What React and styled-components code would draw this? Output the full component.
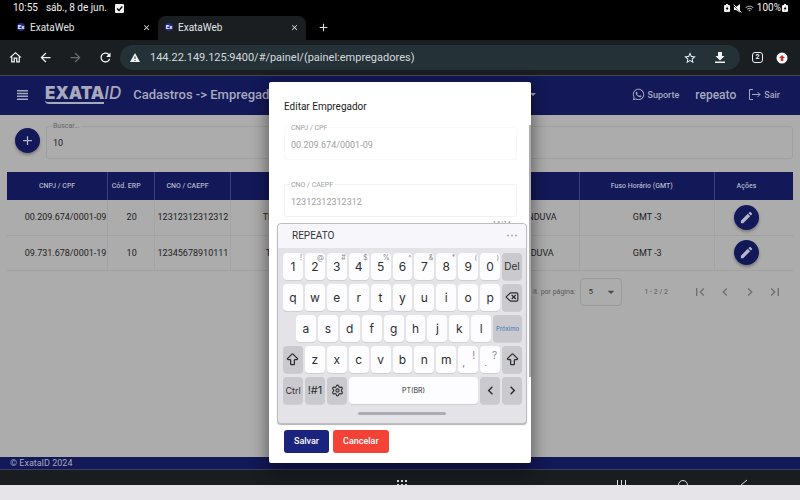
import React from "react";
import styled, { createGlobalStyle } from "styled-components";
import {
  MdOutlineHome, MdArrowBack, MdArrowForward, MdRefresh, MdStarBorder,
  MdClose, MdAdd, MdEdit, MdFirstPage, MdLastPage, MdChevronLeft,
  MdChevronRight, MdArrowDropDown, MdWifi,
} from "react-icons/md";
import { FaWhatsapp } from "react-icons/fa";
import { Settings, Delete, ArrowBigUp } from "lucide-react";

const navy = "#121858";
const gray = "#acacac";

const Global = createGlobalStyle`
  * { box-sizing: border-box; }
  body { margin: 0; font-family: Roboto, sans-serif; overflow: hidden; }
  button, input, select { font-family: inherit; margin: 0; }
  button { border: 0; padding: 0; background: none; color: inherit; display: inline-flex; align-items: center; justify-content: center; }
  a { color: inherit; text-decoration: none; }
  svg { display: block; flex: none; }
`;

const Screen = styled.div`
  display: flex;
  flex-direction: column;
  min-height: 100vh;
  background: #000;
`;

const StatusBar = styled.div`
  display: flex;
  align-items: center;
  gap: 8px;
  height: 16px;
  padding: 0 12px 0 13px;
  color: #f2f2f2;
  font-size: 10px;
  line-height: 16px;
`;
const StatusIcons = styled.div`
  display: flex;
  align-items: center;
  gap: 3px;
  margin-left: auto;
`;
const Charge = styled.span`
  display: flex;
  align-items: center;
  gap: 1px;
`;

const TabStrip = styled.div`
  display: flex;
  height: 24px;
  padding-left: 10px;
`;
const Tab = styled.div`
  display: flex;
  align-items: center;
  gap: 5px;
  width: 148px;
  padding: 0 7px 2px;
  border-radius: 8px 8px 0 0;
  color: #e3e6e8;
  font-size: 10px;
  background: ${(p) => (p.$active ? "#1a1e21" : "transparent")};
`;
const Favicon = styled.span`
  width: 8px;
  height: 8px;
  border-radius: 4px;
  background: #23298a;
  color: #fff;
  font-size: 6px;
  font-weight: 700;
  line-height: 8px;
  text-align: center;
`;
const TabClose = styled.button`
  margin-left: auto;
`;
const NewTab = styled.button`
  && {
    width: 34px;
    height: 22px;
    color: #e3e6e8;
  }
`;

const BrowserBar = styled.div`
  display: flex;
  align-items: center;
  height: 36px;
  padding-right: 11px;
  background: #1a1e21;
  border-bottom: 1px solid #45484b;
  color: #f1f3f4;
`;
const BarButton = styled.button`
  width: ${(p) => p.$w || 30}px;
  height: 24px;
  && { color: ${(p) => (p.$dim ? "#676b6e" : "#f1f3f4")}; }
`;
const Address = styled.div`
  display: flex;
  align-items: center;
  flex: 1;
  height: 25px;
  padding: 0 5px 0 10px;
  border-radius: 13px;
  background: #243238;
`;
const UrlInput = styled.input`
  flex: 1;
  min-width: 0;
  padding: 0 0 0 10px;
  border: 0;
  background: none;
  color: #d5dadd;
  font-size: 11px;
  outline: 0;
`;
const TabCount = styled.span`
  width: 11px;
  height: 11px;
  border: 1px solid #f1f3f4;
  border-radius: 3px;
  font-size: 7px;
  font-weight: 700;
  line-height: 9px;
  text-align: center;
`;

const Site = styled.div`
  position: relative;
  display: flex;
  flex-direction: column;
  flex: 1;
  background: ${gray};
`;
const Header = styled.header`
  display: flex;
  align-items: center;
  height: 39px;
  padding: 0 20px 2px 16px;
  background: ${navy};
  color: #a7a9bd;
`;
const Logo = styled.div`
  display: flex;
  margin: 0 12px 0 16px;
  font-family: Inter, sans-serif;
  font-size: 17px;
  line-height: 17px;
`;
const LogoBold = styled.span`
  font-weight: 900;
  border-bottom: 2px solid #a7a9bd;
  border-radius: 0 0 0 4px;
`;
const LogoThin = styled.span`
  font-weight: 500;
  font-style: italic;
`;
const Crumb = styled.h1`
  width: 153px;
  margin: 0;
  font-size: 13px;
  font-weight: 500;
  white-space: nowrap;
`;
const CompanyMenu = styled.button`
  width: 250px;
  && { justify-content: flex-end; }
`;
const HeaderLinks = styled.nav`
  display: flex;
  align-items: center;
  gap: 12px;
  margin-left: auto;
  font-size: 9px;
  font-weight: 500;
`;
const HeaderLink = styled.a`
  display: flex;
  align-items: center;
  gap: 3px;
`;
const User = styled.span`
  margin-left: 4px;
  font-size: 12px;
`;

const Main = styled.main`
  flex: 1;
  padding: 7px 7px 0;
  color: #222;
`;
const SearchRow = styled.div`
  display: flex;
  align-items: center;
  gap: 6px;
  padding-left: 8px;
`;
const Fab = styled.button`
  && {
    width: 25px;
    height: 25px;
    border-radius: 13px;
    background: ${navy};
    color: #b5b7ca;
    box-shadow: 0 2px 3px rgba(0, 0, 0, 0.3);
  }
`;
const Outlined = styled.fieldset`
  flex: 1 1 auto;
  min-width: 0;
  height: ${(p) => p.$h}px;
  margin: 0;
  padding: 0 5px;
  border: 1px solid ${(p) => p.$line};
  border-radius: 3px;
`;
const FloatLabel = styled.legend`
  padding: 0 1px;
  height: 8px;
  color: ${(p) => p.$color};
  font-size: 7px;
  line-height: 8px;
`;
const FieldInput = styled.input`
  display: block;
  width: 100%;
  height: 26px;
  padding: 0 1px;
  border: 0;
  outline: 0;
  background: none;
  color: ${(p) => p.$color};
  font-size: 9px;
`;

const Table = styled.table`
  width: 100%;
  margin-top: 13px;
  border-collapse: collapse;
  table-layout: fixed;
  font-size: 9px;
  text-align: center;
`;
const Col = styled.col`
  width: ${(p) => p.$w};
`;
const Th = styled.th`
  height: 28px;
  padding: 0 10px 0 0;
  background: ${navy};
  border-right: 1px solid #3b4078;
  color: #b3b5c8;
  font-size: 7px;
  font-weight: 500;
  white-space: nowrap;
  &:first-child { padding-right: 0; }
  &:last-child { border-right: 0; padding-right: 15px; }
`;
const Td = styled.td`
  height: 35px;
  padding: 0 0 0 1px;
  border-right: 1px solid #a4a4a4;
  border-bottom: 1px solid #a0a0a0;
  white-space: nowrap;
  &:first-child { padding-left: 17px; }
  &:last-child { border-right: 0; padding-right: 15px; }
`;

const Pager = styled.div`
  display: flex;
  align-items: center;
  justify-content: flex-end;
  height: 45px;
  padding: 0 10px 3px 0;
  color: #5a5a5a;
  font-size: 7px;
`;
const SelectBox = styled.div`
  position: relative;
  margin: 0 22px 0 5px;
  color: #4a4a4a;
  > svg { position: absolute; right: 3px; top: 6px; pointer-events: none; }
`;
const PageSize = styled.select`
  display: block;
  width: 42px;
  height: 28px;
  padding: 0 7px;
  appearance: none;
  border: 1px solid #999;
  border-radius: 4px;
  background: none;
  color: #333;
  font-size: 8px;
`;
const PageButtons = styled.div`
  display: flex;
  gap: 9px;
  margin-left: 24px;
  color: #707070;
`;

const Footer = styled.footer`
  height: 13px;
  padding-left: 10px;
  background: ${navy};
  border-bottom: 1px solid #3c4060;
  color: #a7a9bd;
  font-size: 9px;
  line-height: 12px;
`;

const Overlay = styled.div`
  position: absolute;
  inset: 0;
  display: flex;
  align-items: center;
  justify-content: center;
  padding-bottom: 2px;
`;
const Dialog = styled.form`
  position: relative;
  width: 262px;
  padding: 18px 14px 10px 15px;
  border-radius: 2px;
  background: #fff;
  box-shadow: 0 6px 16px 2px rgba(0, 0, 0, 0.45);
`;
const DialogTitle = styled.h2`
  margin: 0 0 10px;
  color: #222;
  font-size: 10px;
  font-weight: 400;
  line-height: 14px;
`;
const DialogFields = styled.div`
  display: flex;
  flex-direction: column;
  gap: 21px;
  height: 294px;
`;
const DialogField = styled.div`
  display: flex;
  flex-direction: column;
`;
const Counter = styled.span`
  align-self: flex-end;
  margin: 3px 6px 0 0;
  color: #888;
  font-size: 7px;
  line-height: 8px;
`;
const Actions = styled.div`
  display: flex;
  gap: 4px;
  margin-top: 12px;
`;
const Action = styled.button`
  && {
    height: 23px;
    padding: 0 10px;
    border-radius: 3px;
    background: ${(p) => p.$bg};
    color: #fff;
    font-size: 9px;
    font-weight: 500;
  }
`;
const ScrollThumb = styled.div`
  position: absolute;
  top: 43px;
  right: 0;
  width: 2px;
  height: 252px;
  background: #adadad;
`;

const Keyboard = styled.div`
  position: absolute;
  left: 8px;
  top: 141px;
  width: 250px;
  border: 1px solid #bdbdc1;
  border-radius: 4px;
  background: #e3e3e8;
  box-shadow: 0 1px 1px rgba(0, 0, 0, 0.3);
`;
const Suggest = styled.div`
  display: flex;
  align-items: center;
  justify-content: space-between;
  height: 24px;
  padding: 0 9px 0 14px;
  border-radius: 4px 4px 0 0;
  background: #f7f7fb;
  color: #333;
  font-size: 10px;
`;
const Keys = styled.div`
  display: flex;
  flex-direction: column;
  gap: 4px;
  padding: 5px 4px 0 5px;
  font-family: Inter, sans-serif;
`;
const KeyRow = styled.div`
  display: flex;
  gap: 2px;
  padding-left: ${(p) => (p.$inset ? 13 : 0)}px;
`;
const Key = styled.button`
  && {
    position: relative;
    flex: ${(p) => p.$grow || 1} 1 0;
    min-width: 0;
    height: 27px;
    border-radius: 4px;
    background: ${(p) => (p.$dark ? "#c9c9ce" : "#fdfdff")};
    box-shadow: 0 1px 0 #cfcfd4;
    color: ${(p) => (p.$blue ? "#3a78bd" : "#2d2d30")};
    font-size: ${(p) => p.$size || 12}px;
  }
`;
const Hint = styled.span`
  position: absolute;
  top: 1px;
  right: 1px;
  color: #8a8a90;
  font-size: 7px;
  line-height: 8px;
`;
const PunctHint = styled(Hint)`
  top: 4px;
  right: 3px;
  font-size: 10px;
  line-height: 10px;
`;
const PunctMark = styled.span`
  flex: 1;
  padding: 6px 0 0 4px;
  color: #77777c;
  font-size: 10px;
  line-height: 12px;
  text-align: left;
`;
const HomePill = styled.div`
  width: 88px;
  height: 3px;
  margin: 8px auto;
  border-radius: 2px;
  background: #adadb1;
`;

const SystemBar = styled.div`
  display: flex;
  align-items: flex-end;
  height: 15px;
  padding: 0 52px 0 397px;
  background: #1a1d20;
  color: #ddd;
`;
const SystemKeys = styled.div`
  display: flex;
  gap: 51px;
  margin-left: auto;
`;
const Strip = styled.div`
  height: 15px;
  background: #e6e4e9;
`;

const digits = [["1", "!"], ["2", "@"], ["3", "#"], ["4", "$"], ["5", "%"], ["6", "^"], ["7", "&"], ["8", "*"], ["9", "("], ["0", ")"]];
const columns = ["12.8%", "6%", "9.6%", "22.2%", "22.2%", "17.2%", "10%"];
const rows = [
  { cnpj: "00.209.674/0001-09", erp: "20", cno: "12312312312312", name: "TRANSPORTES CATANDUVA LTDA", city: "CATANDUVA" },
  { cnpj: "09.731.678/0001-19", erp: "10", cno: "12345678910111", name: "TRANSLOG CATANDUVA LTDA", city: "CATANDUVA" },
];

const NameTd = styled(Td)`
  padding-left: ${(p) => p.$pad}px;
  overflow: hidden;
  text-align: left;
`;
const CityTd = styled(Td)`
  padding-right: ${(p) => p.$pad}px;
  text-align: right;
`;

function Battery() {
  return (
    <svg width="6" height="9" viewBox="0 0 6 9">
      <path d="M2 0h2v1h1q1 0 1 1v5q0 1-1 1H1q-1 0-1-1V2q0-1 1-1h1z" fill="#f2f2f2" />
      <path d="M3.500 2.300L1.700 5h1v1.700L4.500 4h-1z" fill="#000" />
    </svg>
  );
}

function BrowserTab({ active }) {
  return (
    <Tab $active={active}>
      <Favicon>Ex</Favicon>
      <span>ExataWeb</span>
      <TabClose aria-label="Fechar aba"><MdClose size={9} /></TabClose>
    </Tab>
  );
}

function DialogInput({ id, label, value, line, counter }) {
  return (
    <DialogField>
      <Outlined $h={36} $line={line}>
        <FloatLabel $color="#a0a0a0"><label htmlFor={id}>{label}</label></FloatLabel>
        <FieldInput id={id} $color="#a0a0a0" defaultValue={value} disabled />
      </Outlined>
      {counter && <Counter>{counter}</Counter>}
    </DialogField>
  );
}

function VirtualKeyboard() {
  return (
    <Keyboard>
      <Suggest>
        <span>REPEATO</span>
        <svg width="11" height="3" fill="#aaaab0"><circle cx="2" cy="1.500" r="1" /><circle cx="6" cy="1.500" r="1" /><circle cx="10" cy="1.500" r="1" /></svg>
      </Suggest>
      <Keys>
        <KeyRow>
          {digits.map(([d, h]) => <Key type="button" key={d}>{d}<Hint>{h}</Hint></Key>)}
          <Key type="button" $dark $size={10}>Del</Key>
        </KeyRow>
        <KeyRow>
          {[..."qwertyuiop"].map((k) => <Key type="button" key={k}>{k}</Key>)}
          <Key type="button" $dark aria-label="Apagar"><Delete size={14} strokeWidth={2} /></Key>
        </KeyRow>
        <KeyRow $inset>
          {[..."asdfghjkl"].map((k) => <Key type="button" key={k}>{k}</Key>)}
          <Key type="button" $dark $blue $size={6} $grow={1.45}>Próximo</Key>
        </KeyRow>
        <KeyRow>
          <Key type="button" $dark aria-label="Shift"><ArrowBigUp size={15} strokeWidth={2} /></Key>
          {[..."zxcvbnm"].map((k) => <Key type="button" key={k}>{k}</Key>)}
          <Key type="button"><PunctMark>,</PunctMark><PunctHint>!</PunctHint></Key>
          <Key type="button"><PunctMark>.</PunctMark><PunctHint>?</PunctHint></Key>
          <Key type="button" $dark aria-label="Shift"><ArrowBigUp size={15} strokeWidth={2} /></Key>
        </KeyRow>
        <KeyRow>
          <Key type="button" $dark $size={9}>Ctrl</Key>
          <Key type="button" $dark $size={11}>!#1</Key>
          <Key type="button" $dark aria-label="Configurações"><Settings size={13} strokeWidth={2} /></Key>
          <Key type="button" $grow={6.45} $size={7}>PT(BR)</Key>
          <Key type="button" $dark aria-label="Esquerda"><MdChevronLeft size={17} /></Key>
          <Key type="button" $dark aria-label="Direita"><MdChevronRight size={17} /></Key>
        </KeyRow>
      </Keys>
      <HomePill />
    </Keyboard>
  );
}

export default function App() {
  return (
    <Screen>
      <Global />
      <StatusBar>
        <span>10:55</span>
        <span>sáb., 8 de jun.</span>
        <svg width="9" height="9" viewBox="0 0 9 9">
          <rect width="9" height="9" rx="1" fill="#f2f2f2" />
          <path d="M2 4.500l2 2L7.300 2.500" fill="none" stroke="#000" strokeWidth="1.300" />
        </svg>
        <StatusIcons>
          <Battery />
          <svg width="9" height="9" viewBox="0 0 9 9" fill="#f2f2f2">
            <path d="M1 3h2L7 0v8.500L3 6H1z" />
            <path d="M.5 1.500l8 7" stroke="#000" /><path d="M.7.700l7.800 7.800" stroke="#f2f2f2" />
          </svg>
          <MdWifi size={9} color="#aaa" />
          <Charge><span>100%</span><Battery /></Charge>
        </StatusIcons>
      </StatusBar>
      <TabStrip>
        <BrowserTab />
        <BrowserTab active />
        <NewTab aria-label="Nova aba"><MdAdd size={13} /></NewTab>
      </TabStrip>
      <BrowserBar>
        <BarButton aria-label="Início"><MdOutlineHome size={15} /></BarButton>
        <BarButton aria-label="Voltar"><MdArrowBack size={15} /></BarButton>
        <BarButton $dim aria-label="Avançar"><MdArrowForward size={15} /></BarButton>
        <BarButton aria-label="Atualizar"><MdRefresh size={15} /></BarButton>
        <Address>
          <svg width="10" height="9" fill="#f1f3f4"><path d="M5 0l5 9H0z" /><path d="M4.500 3.500h1v2.500h-1zM4.500 7h1v1h-1z" fill="#243238" /></svg>
          <UrlInput aria-label="Endereço" defaultValue="144.22.149.125:9400/#/painel/(painel:empregadores)" />
          <BarButton aria-label="Favoritar"><MdStarBorder size={14} /></BarButton>
          <BarButton aria-label="Baixar">
            <svg width="10" height="11" fill="currentColor"><path d="M3 0h4v4h2.500L5 8.500.500 4H3zM0 9.500h10V11H0z" /></svg>
          </BarButton>
        </Address>
        <BarButton $w={35} aria-label="Abas"><TabCount>2</TabCount></BarButton>
        <BarButton $w={14} aria-label="Menu">
          <svg width="12" height="12"><circle cx="6" cy="6" r="5.500" fill="#fff" /><path d="M6 3l3 3H7.300v3H4.700V6H3z" fill="#d93025" /></svg>
        </BarButton>
      </BrowserBar>

      <Site>
        <Header>
          <BarButton $w={13} aria-label="Menu">
            <svg width="11" height="10" fill="#a7a9bd"><path d="M0 0h11v1.500H0zM0 2.800h11v1.500H0zM0 5.600h11v1.500H0zM0 8.400h11v1.500H0z" /></svg>
          </BarButton>
          <Logo><LogoBold>EXATA</LogoBold><LogoThin>ID</LogoThin></Logo>
          <Crumb>Cadastros -&gt; Empregadores</Crumb>
          <CompanyMenu aria-label="Empresa"><svg width="6" height="3" fill="currentColor"><path d="M0 0h6L3 3z" /></svg></CompanyMenu>
          <HeaderLinks>
            <HeaderLink href="#suporte"><FaWhatsapp size={13} />Suporte</HeaderLink>
            <User>repeato</User>
            <HeaderLink href="#sair">
              <svg width="13" height="13" viewBox="0 0 13 13" fill="none" stroke="currentColor"><path d="M5 1.500H1.500v10H5M4 6.500h8M9.500 4l2.500 2.500L9.500 9" /></svg>
              Sair
            </HeaderLink>
          </HeaderLinks>
        </Header>
        <Main>
          <SearchRow>
            <Fab aria-label="Adicionar"><MdAdd size={15} /></Fab>
            <Outlined $h={37} $line="#a0a0a0">
              <FloatLabel $color="#666"><label htmlFor="busca">Buscar...</label></FloatLabel>
              <FieldInput id="busca" $color="#222" defaultValue="10" />
            </Outlined>
          </SearchRow>
          <Table>
            <colgroup>{columns.map((w, i) => <Col key={i} $w={w} />)}</colgroup>
            <thead>
              <tr><Th>CNPJ / CPF</Th><Th>Cód. ERP</Th><Th>CNO / CAEPF</Th><Th>Nome</Th><Th>Cidade</Th><Th>Fuso Horário (GMT)</Th><Th>Ações</Th></tr>
            </thead>
            <tbody>
              {rows.map((r, i) => (
                <tr key={r.cnpj}>
                  <Td>{r.cnpj}</Td><Td>{r.erp}</Td><Td>{r.cno}</Td>
                  <NameTd $pad={i ? 35 : 32}>{r.name}</NameTd>
                  <CityTd $pad={i ? 25 : 22}>{r.city}</CityTd>
                  <Td>GMT -3</Td>
                  <Td><Fab aria-label="Editar"><MdEdit size={15} /></Fab></Td>
                </tr>
              ))}
            </tbody>
          </Table>
          <Pager>
            <label htmlFor="tamanho">It. por página:</label>
            <SelectBox>
              <PageSize id="tamanho" defaultValue="5"><option>5</option></PageSize>
              <MdArrowDropDown size={16} />
            </SelectBox>
            <span>1 - 2 / 2</span>
            <PageButtons>
              <button aria-label="Primeira página"><MdFirstPage size={16} /></button>
              <button aria-label="Página anterior"><MdChevronLeft size={16} /></button>
              <button aria-label="Próxima página"><MdChevronRight size={16} /></button>
              <button aria-label="Última página"><MdLastPage size={16} /></button>
            </PageButtons>
          </Pager>
        </Main>
        <Footer>© ExataID 2024</Footer>
        <Overlay>
          <Dialog role="dialog" aria-labelledby="titulo">
            <DialogTitle id="titulo">Editar Empregador</DialogTitle>
            <DialogFields>
              <DialogInput id="cnpj" label="CNPJ / CPF" value="00.209.674/0001-09" line="#f8f8f8" />
              <DialogInput id="cno" label="CNO / CAEPF" value="12312312312312" line="#f2f2f2" counter="14/14" />
            </DialogFields>
            <Actions>
              <Action type="button" $bg="#1a237e">Salvar</Action>
              <Action type="button" $bg="#f44336">Cancelar</Action>
            </Actions>
            <ScrollThumb />
            <VirtualKeyboard />
          </Dialog>
        </Overlay>
      </Site>

      <SystemBar>
        <svg width="12" height="6" fill="currentColor"><path d="M0 1h2v2H0zM4 1h2v2H4zM8 1h2v2H8zM0 5h2v1H0zM4 5h2v1H4zM8 5h2v1H8z" /></svg>
        <SystemKeys>
          <svg width="10" height="6" stroke="currentColor"><path d="M1.500 1v5M5.500 1v5M9.500 1v5" /></svg>
          <svg width="12" height="6" fill="none" stroke="currentColor"><circle cx="6" cy="6" r="4.500" /></svg>
          <svg width="8" height="6" fill="none" stroke="currentColor"><path d="M7 1L1 6" /></svg>
        </SystemKeys>
      </SystemBar>
      <Strip />
    </Screen>
  );
}
